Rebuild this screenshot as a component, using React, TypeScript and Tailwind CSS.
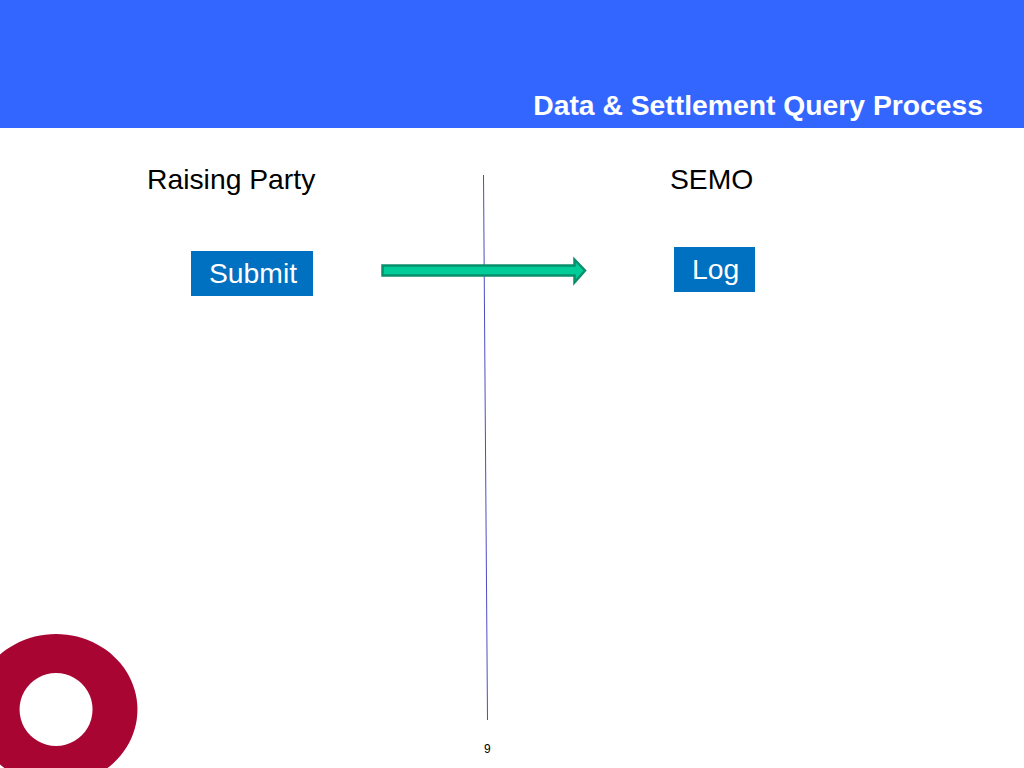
const sans = "font-['Liberation_Sans',Arial,sans-serif]"

function Box({ label, className }: { label: string; className: string }) {
  return (
    <div className={`absolute bg-[#0070c0] text-white text-[28.3px] leading-none flex items-center ${className}`}>
      {label}
    </div>
  )
}

export default function App() {
  return (
    <div className={`${sans} relative w-[1024px] h-[768px] overflow-hidden bg-white text-black`}>
      <header className="h-[128px] bg-[#3366ff] flex items-end justify-end pr-[41px] pb-[7px]">
        <h1 className="text-[28.3px] leading-[32px] font-bold text-white">Data &amp; Settlement Query Process</h1>
      </header>

      <div className="absolute left-[147px] top-[163px] text-[28.3px] leading-[32px]">Raising Party</div>
      <div className="absolute left-[670px] top-[163px] text-[28.3px] leading-[32px]">SEMO</div>

      <Box label="Submit" className="left-[191px] top-[251px] w-[122px] h-[45px] pl-[18px]" />
      <Box label="Log" className="left-[674px] top-[247px] w-[81px] h-[45px] pl-[18px]" />

      {/* divider and arrow */}
      <svg className="absolute left-0 top-0" width="1024" height="768" fill="none">
        <line x1="483.5" y1="175" x2="487.5" y2="720" stroke="#4d4dc4" strokeWidth="1" />
        <path
          d="M382.5 265.5H574.5V259.5L585 270.5L574.5 282.5V275.5H382.5Z"
          fill="#00cc99"
          stroke="#0a8f6c"
          strokeWidth="2.5"
        />
      </svg>

      {/* logo */}
      <svg className="absolute left-0 top-[630px]" width="140" height="138">
        <path
          fillRule="evenodd"
          d="M56 4A81.5 75.5 0 1 1 55.9 4ZM56 43A36.5 36.5 0 1 0 56.1 43Z"
          fill="#a80533"
        />
      </svg>

      <div className="absolute left-[484px] top-[742px] text-[12px] leading-[14px]">9</div>
    </div>
  )
}
